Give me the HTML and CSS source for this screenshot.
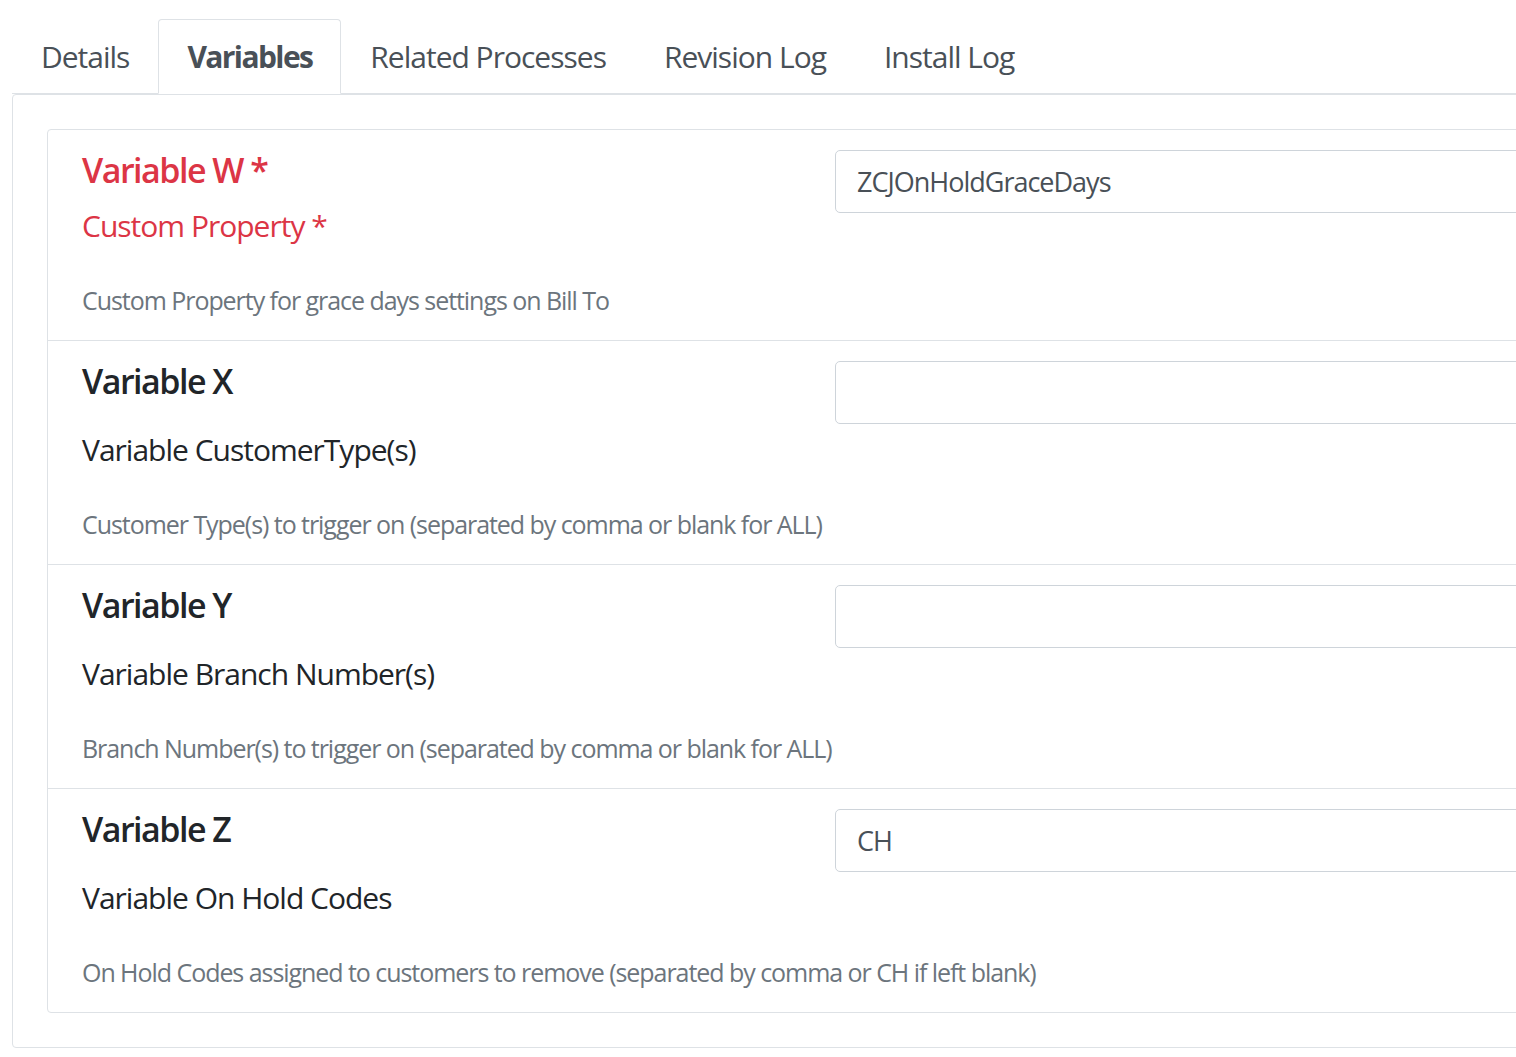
FILE: index.html
```html
<!DOCTYPE html>
<html lang="en">
  <head>
    <meta charset="UTF-8" />
    <title>Process Variables</title>
    <link rel="stylesheet" href="styles.css">
  </head>
  <body>
    <div class="page">
      <ul class="nav-tabs">
        <li><a class="nav-link" href="#">Details</a></li>
        <li><a class="nav-link active" href="#">Variables</a></li>
        <li><a class="nav-link" href="#">Related Processes</a></li>
        <li><a class="nav-link" href="#">Revision Log</a></li>
        <li><a class="nav-link" href="#">Install Log</a></li>
      </ul>

      <div class="tab-panel">
        <div class="var-card">
          <div class="var-row">
            <div class="var-head">
              <div class="var-label">
                <div class="var-title required tight">Variable W *</div>
                <div class="var-name required">Custom Property *</div>
              </div>
              <div class="var-input">
                <input type="text" class="form-control" value="ZCJOnHoldGraceDays" />
              </div>
            </div>
            <div class="var-desc">Custom Property for grace days settings on Bill To</div>
          </div>

          <div class="var-row">
            <div class="var-head">
              <div class="var-label">
                <div class="var-title">Variable X</div>
                <div class="var-name">Variable CustomerType(s)</div>
              </div>
              <div class="var-input">
                <input type="text" class="form-control" value="" />
              </div>
            </div>
            <div class="var-desc">Customer Type(s) to trigger on (separated by comma or blank for ALL)</div>
          </div>

          <div class="var-row">
            <div class="var-head">
              <div class="var-label">
                <div class="var-title">Variable Y</div>
                <div class="var-name">Variable Branch Number(s)</div>
              </div>
              <div class="var-input">
                <input type="text" class="form-control" value="" />
              </div>
            </div>
            <div class="var-desc">Branch Number(s) to trigger on (separated by comma or blank for ALL)</div>
          </div>

          <div class="var-row">
            <div class="var-head">
              <div class="var-label">
                <div class="var-title">Variable Z</div>
                <div class="var-name">Variable On Hold Codes</div>
              </div>
              <div class="var-input">
                <input type="text" class="form-control" value="CH" />
              </div>
            </div>
            <div class="var-desc">On Hold Codes assigned to customers to remove (separated by comma or CH if left blank)</div>
          </div>
        </div>
      </div>
    </div>
  </body>
</html>
```

FILE: styles.css
```css
html,
body {
  overflow: hidden;
}

body {
  margin: 0;
  background: #fff;
  font-family: "Open Sans", "Noto Sans", sans-serif;
  color: #212529;
}

.page {
  width: 1700px;
  padding: 19px 0 0 12px;
}

.nav-tabs {
  display: flex;
  list-style: none;
  margin: 0;
  padding: 0;
  border-bottom: 1px solid #dee2e6;
}

.nav-link {
  display: block;
  margin-bottom: -1px;
  padding: 14px 28px;
  border: 1px solid transparent;
  border-radius: 4px 4px 0 0;
  font-size: 30px;
  line-height: 45px;
  letter-spacing: -1px;
  color: #495057;
  text-decoration: none;
}

.nav-link.active {
  font-weight: 700;
  letter-spacing: -1.6px;
  background: #fff;
  border-color: #dee2e6 #dee2e6 #fff;
}

.tab-panel {
  border: 1px solid #dee2e6;
  border-radius: 4px;
  padding: 34px;
}

.var-card {
  border: 1px solid #dee2e6;
  border-radius: 4px;
}

.var-row {
  padding: 19px 34px 21px;
}

.var-row + .var-row {
  border-top: 1px solid #dee2e6;
}

.var-head {
  display: flex;
}

.var-label {
  flex: 0 0 753px;
}

.var-title {
  font-size: 34px;
  line-height: 42px;
  font-weight: 600;
  letter-spacing: -1.5px;
  margin-bottom: 25px;
}

.var-title.tight {
  margin-bottom: 12px;
}

.var-name {
  font-size: 30px;
  line-height: 45px;
  letter-spacing: -1px;
}

.required {
  color: #dc3545;
}

.var-desc {
  margin-top: 33px;
  font-size: 25px;
  line-height: 38px;
  letter-spacing: -1.05px;
  color: #6c757d;
  white-space: nowrap;
}

.var-input {
  flex: 1;
  padding-top: 1px;
}

.form-control {
  display: block;
  width: 100%;
  box-sizing: border-box;
  height: 63px;
  padding: 11px 21px;
  border: 1px solid #ced4da;
  border-radius: 5px;
  font-family: inherit;
  font-size: 27px;
  line-height: 39px;
  letter-spacing: -1px;
  color: #495057;
  background: #fff;
}
```
